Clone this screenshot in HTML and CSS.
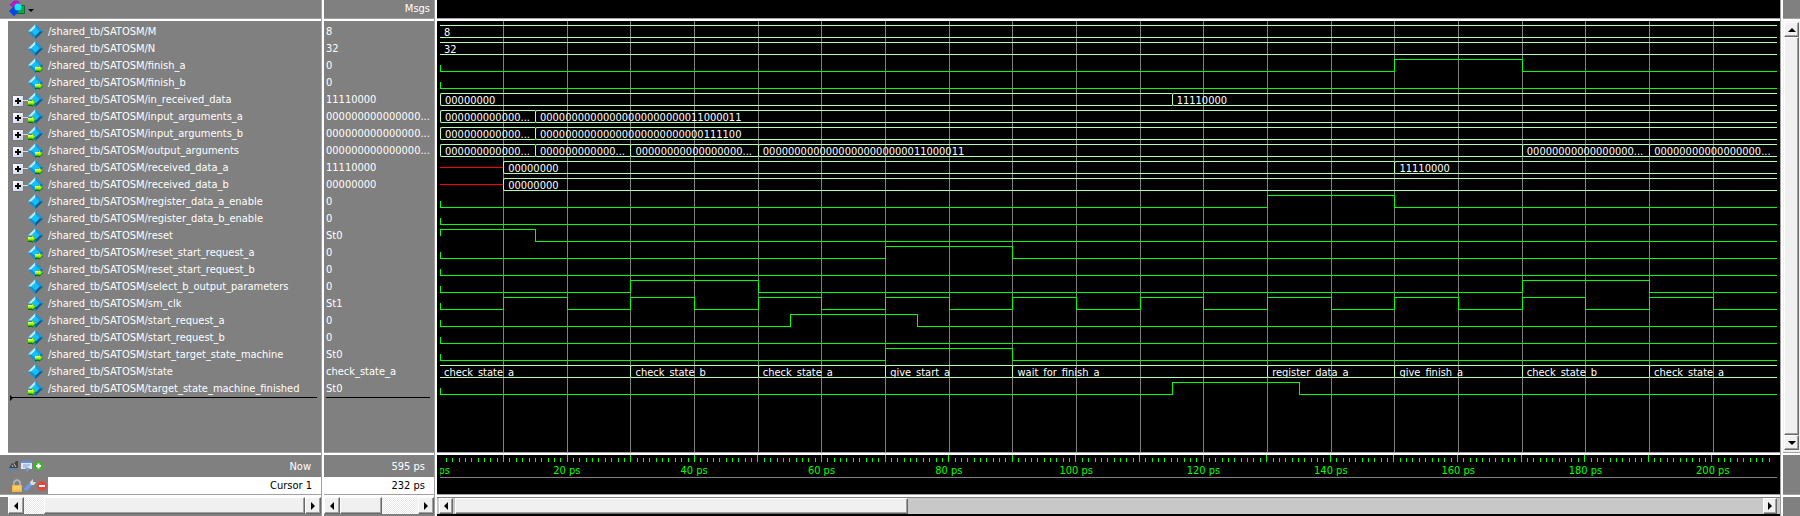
FILE: index.html
```
<!DOCTYPE html>
<html lang="en">
<head>
<meta charset="utf-8">
<title>Wave</title>
<link rel="stylesheet" href="styles.css">
</head>
<body>
<svg class="defs" aria-hidden="true">
  <symbol id="gem" viewBox="0 0 15 15">
    <path d="M7.500 0 L15 7.500 L7.500 15 L0 7.500Z" fill="#1690d0"/>
    <path d="M7.500 0 L0 7.500 H3.500 L7.500 3.500Z" fill="#b4ecfa"/>
    <path d="M7.500 0 L15 7.500 H11.500 L7.500 3.500Z" fill="#1e96d6"/>
    <path d="M15 7.500 L7.500 15 V11.500 L11.500 7.500Z" fill="#06608e"/>
    <path d="M7.500 3.500 L11.500 7.500 L7.500 11.500 L3.500 7.500Z" fill="#12c0fa"/>
  </symbol>
  <symbol id="arrow" viewBox="0 0 8 8">
    <path d="M0 2h4V0l4 4-4 4V7H0z" fill="#0a6e0a"/>
    <path d="M0 2h4V0l3.500 3.500-3 3V5.500H0z" fill="#86ee0e"/>
    <path d="M0 2h5v1.500H0z" fill="#eefc58"/>
  </symbol>
</svg>
<main class="wave">
  <section class="col names">
    <header class="bar">
      <button class="tool" aria-label="Signal options">
        <svg width="26" height="17" viewBox="0 0 26 17"><path d="M1 5l4-4h4l2 3-4 4z" fill="#c414d8" stroke="#7a0a8c" stroke-width=".5"/><path d="M9.500 5.500h6v8h-8z" fill="#12a848" stroke="#0b6b32"/><path d="M5 6l5 5-5 5.500-5-5.500z" fill="#0a46e0"/><circle cx="9" cy="7" r="3.500" fill="#16e6f2"/><path d="M19 9h6l-3 3z" fill="#000"/></svg>
      </button>
    </header>
    <div class="pane name-pane"><ul class="list" id="names"></ul></div>
    <div class="cursors">
      <div class="now"><span class="icons">
        <svg width="12" height="12" viewBox="0 0 12 12"><path d="M0 8l3-5 2 1 2-3h2v7z" fill="#444"/><path d="M5 4l2 3M3 5l1 2" stroke="#ccc"/><path d="M0 9.500h9M2 8L.5 9.500 2 11" stroke="#4d83d6" fill="none"/></svg><svg width="12" height="12" viewBox="0 0 12 12"><path d="M0 1h11v8H0z" fill="#dce9fb"/><path d="M0 1h11v2H0z" fill="#5b8fe0"/><path d="M2 5h7M2 7h5" stroke="#7f9cc8"/><path d="M4 8h5l-2.500 4z" fill="#6e9de6"/></svg><svg width="12" height="12" viewBox="0 0 12 12"><circle cx="5.500" cy="6" r="5" fill="#4aac3c"/><path d="M3 6h5M5.500 3.500v5" stroke="#fff" stroke-width="2"/></svg>
      </span><span>Now</span></div>
      <div class="cur"><span class="icons cur-icons">
        <svg width="14" height="13" viewBox="0 0 14 13"><path d="M4 6V3q3-4 6 0v3" fill="none" stroke="#bbb" stroke-width="1.500"/><path d="M2 6h10v7H2z" fill="#f2b741"/><path d="M3 8h8M3 10h8" stroke="#fbe29a"/></svg><svg width="12" height="13" viewBox="0 0 12 13"><path d="M2 10l5-5" stroke="#6c9bea" stroke-width="3.500" stroke-linecap="round"/><path d="M7 6l-1-3 3-3v3l3 0-2 3z" fill="#ddd"/></svg><svg width="12" height="12" viewBox="0 0 12 12"><circle cx="6" cy="6" r="5" fill="#e2483e"/><path d="M3 6h6" stroke="#fff" stroke-width="2"/></svg>
      </span><span class="cur-name">Cursor 1</span></div>
    </div>
    <div class="scroll scroll-names"><button class="sb left" aria-label="Scroll names left"></button><div class="track dither names-track"><div class="thumb"></div></div><button class="sb right" aria-label="Scroll names right"></button></div>
  </section>
  <section class="col values">
    <header class="bar msgs">Msgs</header>
    <div class="pane value-pane"><ul class="list" id="values"></ul></div>
    <div class="cursors">
      <div class="now"><span>595 ps</span></div>
      <div class="cur"><span class="cur-name">232 ps</span></div>
    </div>
    <div class="scroll"><button class="sb left" aria-label="Scroll values left"></button><div class="track dither values-track"><div class="thumb"></div></div><button class="sb right" aria-label="Scroll values right"></button></div>
  </section>
  <section class="col plot">
    <header class="bar"></header>
    <div class="pane plot-pane"><div class="grid" id="grid"></div><div class="signals" id="signals"></div></div>
    <div class="cursors ruler"><div class="ticks" id="ticks"></div><div class="times" id="times"></div></div>
    <div class="scroll scroll-plot"><button class="sb left" aria-label="Scroll waves left"></button><div class="track plain"><div class="thumb"></div></div><button class="sb right" aria-label="Scroll waves right"></button></div>
  </section>
  <aside class="col side">
    <div class="bar"></div>
    <div class="pane vscroll"><button class="sb up" aria-label="Scroll up"></button><div class="thumb vthumb"></div><button class="sb down" aria-label="Scroll down"></button></div>
    <div class="cursors"></div>
    <div class="scroll"></div>
  </aside>
</main>
<script src="wave.js"></script>
</body>
</html>
```
FILE: styles.css
```
* { box-sizing: border-box; }
html, body { height: 100%; margin: 0; }
body {
  background: #808080;
  color: #fff;
  font: 11px/17px "DejaVu Sans Condensed", "DejaVu Sans", sans-serif;
  overflow: hidden;
}
ul { list-style: none; margin: 0; padding: 0; }
button { border: 0; padding: 0; margin: 0; }
.defs { position: absolute; width: 0; height: 0; }

.wave { display: grid; grid-template-columns: 324px 113px 1fr 17px; min-height: 100vh; }
.col {
  display: grid;
  grid-template-rows: 21px 1fr 42px 19px;
  min-width: 0;
  border-right: 2px solid #fff;
  box-shadow: inset -1px 0 #a0a0a0;
  padding-right: 1px;
}
.col > * { min-width: 0; }
.bar, .pane, .cursors { border-bottom: 2px solid #fff; box-shadow: inset 0 -1px #a0a0a0; }
.side { border-right: 0; padding-right: 0; box-shadow: none; }

.tool { display: block; margin-left: 9px; background: none; }
.tool svg { display: block; }
.msgs { text-align: right; padding-right: 4px; }

.name-pane { border-left: 8px solid #fff; padding-top: 2px; }
.value-pane { padding-top: 2px; }
.list { position: relative; border-bottom: 1px solid #000; }
.name-pane .list { margin: 0 4px 0 3px; }
.value-pane .list { margin: 0 4px 0 2px; }
.name-pane .list::after {
  content: "";
  position: absolute;
  left: -1px;
  bottom: -4px;
  border: 3px solid transparent;
  border-left-color: #000;
}
.list li { height: 17px; white-space: nowrap; }
.name { display: flex; align-items: center; }
.plus {
  width: 10px; height: 10px; margin: 3px 0 0 2px;
  background:
    linear-gradient(#000, #000) center / 6px 2px no-repeat,
    linear-gradient(#000, #000) center / 2px 6px no-repeat,
    linear-gradient(135deg, #fff, #c8cfe4);
  box-shadow: 0 0 1px #44507c;
}
.link { width: 5px; height: 1px; background: #ddd; margin-top: 2px; }
.gem { position: relative; width: 15px; height: 15px; margin: 0 5px 0 0; }
.gem.alone { margin-left: 17px; }
.gem svg { display: block; width: 15px; height: 15px; }
.gem .arrow { position: absolute; width: 8px; height: 8px; bottom: 0; }
.gem.in .arrow { left: 0; }
.gem.out .arrow { right: 0; }

.cursors { display: grid; grid-template-rows: 22px 17px; }
.now, .cur { display: flex; align-items: center; justify-content: space-between; }
.values .now { justify-content: flex-end; padding-right: 9px; }
.names .now { padding: 0 10px 0 9px; }
.icons { display: flex; align-items: center; }
.cur-icons { padding-left: 10px; width: 48px; }
.cur-name { flex: 1; background: #fff; color: #000; text-align: right; padding-right: 9px; }

.scroll { display: flex; height: 17px; }
.scroll-names { margin-left: 8px; }
.sb, .thumb { background-color: #f0f0f0; border: 1px solid; border-color: #fff #696969 #696969 #fff; box-shadow: inset -1px -1px #a0a0a0; }
.sb { flex: 0 0 16px; display: flex; align-items: center; justify-content: center; }
.sb::before { content: ""; border: 4px solid transparent; }
.left::before { border-right-color: #000; border-left: 0; }
.right::before { border-left-color: #000; border-right: 0; }
.up::before { border-bottom-color: #000; border-top: 0; }
.down::before { border-top-color: #000; border-bottom: 0; }
.track { flex: 1; display: flex; }
.dither { background: repeating-conic-gradient(#fff 0 25%, #e8e8e8 0 50%) 0 0 / 2px 2px; }
.names-track .thumb { width: 93%; margin-left: auto; }
.values-track .thumb { width: 54%; }
.plain { background: #c8c8c8; padding-left: 2px; }
.plain .thumb { width: 34.6%; }
.scroll-plot { background: #c8c8c8; padding: 0 3px 0 2px; border-top: 1px solid #808080; }
.scroll-plot .sb { flex-basis: 14px; }

.plot { background: #000; }
.plot-pane { position: relative; padding: 4px 3px 0; overflow: hidden; }
.grid { position: absolute; inset: 0 3px 1px; display: flex; }
.grid div { flex: 0 1 0; min-width: 0; border-left: 1px solid #808080; }
.grid div:first-child { border-left: 0; }
.signals { position: relative; display: grid; gap: 4px; }
.signal { display: flex; height: 13px; }
.signal > div { min-width: 0; flex: 0 1 0; }
.bus {
  position: relative;
  overflow: hidden;
  border: 0 solid #b4ffb4;
  border-width: 1px 0;
  line-height: 13px;
  padding-left: 4px;
  white-space: nowrap;
}
.bus.edge { border-left-width: 1px; border-top-left-radius: 2px; border-bottom-left-radius: 2px; }
.lo { border-bottom: 1px solid #0f0; }
.hi { border-top: 1px solid #0f0; }
.rise, .fall { border-left: 1px solid #0f0; }
.first { background: linear-gradient(#0f0, #0f0) 0 100% / 1px 6px no-repeat; }
.first.hi { background-position: 0 0; }
.unknown { background: linear-gradient(red, red) 0 6px / 100% 1px no-repeat; }

.ruler { display: block; padding: 0 3px; }
.ticks { display: flex; height: 7px; align-items: flex-end; }
.ticks div { flex: 0 1 0; min-width: 0; height: 4px; border-left: 1px solid #0f0; }
.ticks div.major { height: 7px; }
.ticks div:first-child { border-left: 0; }
.times { position: relative; height: 16px; border-bottom: 1px solid #808080; color: #0f0; overflow: hidden; }
.times span { position: absolute; top: 0; transform: translateX(-50%); white-space: nowrap; }

.vscroll { display: flex; flex-direction: column; background: #f0f0f0; padding: 1px 1px 3px; }
.vscroll .sb { flex: 0 0 15px; }
.vthumb { flex: 1; }
```
FILE: wave.js
```
const START = 0.08, END = 210.08, SPAN = END - START;
const P = "/shared_tb/SATOSM/";
const z = n => "0".repeat(n);
const low = [[0, 0]];
const clk = [[0, 0]];
for (let t = 10; t < 210; t += 10) clk.push([t, (t / 10) % 2]);

// name, icon kind, expandable, value, wave kind, [start time, level or label] list
const signals = [
  ["M", "", 0, "8", "bus", [[0, "8"]]],
  ["N", "", 0, "32", "bus", [[0, "32"]]],
  ["finish_a", "out", 0, "0", "bit", [[0, 0], [150, 1], [170, 0]]],
  ["finish_b", "out", 0, "0", "bit", low],
  ["in_received_data", "in", 1, "11110000", "bus", [[0, z(8)], [115, "11110000"]], 1],
  ["input_arguments_a", "in", 1, z(15) + "...", "bus", [[0, z(12) + "..."], [15, z(24) + "11000011"]], 1],
  ["input_arguments_b", "in", 1, z(15) + "...", "bus", [[0, z(12) + "..."], [15, z(26) + "111100"]], 1],
  ["output_arguments", "out", 1, z(15) + "...", "bus", [[0, z(12) + "..."], [15, z(12) + "..."], [30, z(17) + "..."], [50, z(24) + "11000011"], [170, z(17) + "..."], [190, z(17) + "..."]], 1],
  ["received_data_a", "out", 1, "11110000", "bus", [[0, null], [10, z(8)], [150, "11110000"]]],
  ["received_data_b", "out", 1, z(8), "bus", [[0, null], [10, z(8)]]],
  ["register_data_a_enable", "", 0, "0", "bit", [[0, 0], [130, 1], [150, 0]]],
  ["register_data_b_enable", "", 0, "0", "bit", low],
  ["reset", "in", 0, "St0", "bit", [[0, 1], [15, 0]]],
  ["reset_start_request_a", "out", 0, "0", "bit", [[0, 0], [70, 1], [90, 0]]],
  ["reset_start_request_b", "out", 0, "0", "bit", low],
  ["select_b_output_parameters", "", 0, "0", "bit", [[0, 0], [30, 1], [50, 0], [170, 1], [190, 0]]],
  ["sm_clk", "in", 0, "St1", "bit", clk],
  ["start_request_a", "in", 0, "0", "bit", [[0, 0], [55, 1], [75, 0]]],
  ["start_request_b", "in", 0, "0", "bit", low],
  ["start_target_state_machine", "out", 0, "St0", "bit", [[0, 0], [70, 1], [90, 0]]],
  ["state", "", 0, "check_state_a", "bus", [[0, "check_state_a"], [30, "check_state_b"], [50, "check_state_a"], [70, "give_start_a"], [90, "wait_for_finish_a"], [130, "register_data_a"], [150, "give_finish_a"], [170, "check_state_b"], [190, "check_state_a"]]],
  ["target_state_machine_finished", "in", 0, "St0", "bit", [[0, 0], [115, 1], [135, 0]]]
];

const byId = id => document.getElementById(id);
function add(parent, tag, cls, text) {
  const el = document.createElement(tag);
  if (cls) el.className = cls;
  if (text != null) el.textContent = text;
  parent.append(el);
  return el;
}
const width = (a, b) => (Math.min(b, END) - Math.max(a, START)) / SPAN * 100 + "%";

for (const [name, kind, expand, value, type, changes, marked] of signals) {
  const li = add(byId("names"), "li", "name");
  if (expand) { add(li, "span", "plus"); add(li, "span", "link"); }
  const gem = add(li, "span", "gem " + kind + (expand ? "" : " alone"));
  gem.innerHTML = '<svg><use href="#gem"/></svg>' + (kind ? '<svg class="arrow"><use href="#arrow"/></svg>' : "");
  add(li, "span", "", P + name);
  add(byId("values"), "li", "", value);

  const row = add(byId("signals"), "div", "signal");
  changes.forEach(([t, v], i) => {
    const next = i + 1 < changes.length ? changes[i + 1][0] : END;
    let cls;
    if (v === null) cls = "unknown";
    else if (type === "bus") cls = "bus" + (i || marked ? " edge" : "");
    else cls = (v ? "hi" : "lo") + (i ? (v ? " rise" : " fall") : " first");
    const seg = add(row, "div", cls, type === "bus" ? v : null);
    seg.style.flexBasis = width(t, next);
  });
}

for (let t = 0; t <= 200; t += 10) add(byId("grid"), "div").style.flexBasis = width(t, t + 10);
for (let t = 0; t < 210; t++) add(byId("ticks"), "div", t % 10 ? "" : "major").style.flexBasis = width(t, t + 1);
for (let t = 0; t <= 200; t += 20) add(byId("times"), "span", "", t + " ps").style.left = (t - START) / SPAN * 100 + "%";
```
